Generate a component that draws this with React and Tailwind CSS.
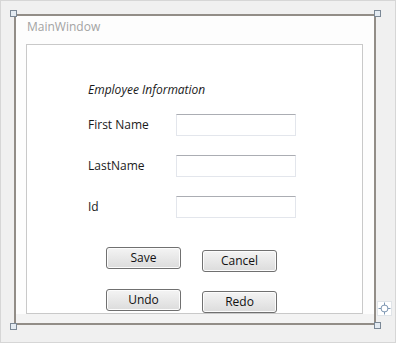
const font = { fontFamily: '"Open Sans", "Noto Sans", sans-serif' };

function Handle({ className }) {
  return <div className={`absolute w-[7px] h-[7px] border border-[#7b8896] bg-[#e4ebf2] ${className}`} />;
}

function Field({ label, first }) {
  return (
    <div className={`flex items-center h-[22px] ${first ? '' : 'mt-[19px]'}`}>
      <span className="w-[88px] text-[12px] text-[#1a1a1a] -mt-[1px]">{label}</span>
      <div className="w-[120px] h-[22px] border border-[#e3e6ec] border-t-[#abadb3] bg-white" />
    </div>
  );
}

function Btn({ children, className }) {
  return (
    <button className={`w-[75px] h-[22px] rounded-[3px] border border-[#707070] bg-gradient-to-b from-[#f4f4f4] to-[#dcdcdc] text-[12px] text-[#111] leading-none shadow-[inset_0_0_0_1px_#fcfcfc] ${className}`}>
      {children}
    </button>
  );
}

export default function App() {
  return (
    <div className="relative w-[396px] h-[343px] bg-[#f0f0f0] border border-[#d6d6d6] pl-[13px] pt-[13px]" style={font}>
      <div className="w-[362px] h-[311px] border-2 border-[#928d87] bg-[#fdfdfd] flex flex-col">
        <div className="h-[28px] pl-[11px] pt-[2px] text-[12px] text-[#a3a3a3]">MainWindow</div>
        <div className="ml-[10px] w-[337px] h-[270px] border border-[#c9c9c9] bg-white pl-[61px] pt-[39px]">
          <div className="text-[12px] italic text-[#1a1a1a] leading-none">Employee Information</div>
          <div className="mt-[18px]">
            <Field label="First Name" first />
            <Field label="LastName" />
            <Field label="Id" />
          </div>
          <div className="ml-[18px] mt-[29px] grid grid-cols-[75px_75px] gap-x-[21px] gap-y-[20px]">
            <Btn>Save</Btn>
            <Btn className="mt-[3px]">Cancel</Btn>
            <Btn className="-mt-[3px]">Undo</Btn>
            <Btn className="-mt-[1px]">Redo</Btn>
          </div>
        </div>
        <div className="flex-1 bg-[#f3f3f3]" />
      </div>
      <Handle className="left-[9px] top-[9px]" />
      <Handle className="left-[373px] top-[9px]" />
      <Handle className="left-[9px] top-[322px]" />
      <Handle className="left-[373px] top-[321px]" />
      <div className="absolute left-[376px] top-[300px] w-[15px] h-[15px] bg-white border border-[#e0e4e8] flex items-center justify-center">
        <svg width="13" height="13" viewBox="0 0 13 13" fill="none" stroke="#7d96b2" strokeWidth="1">
          <circle cx="6.5" cy="6.5" r="3.5" />
          <path d="M6.5 0.5v3M6.5 9.5v3M0.5 6.5h3M9.5 6.5h3" />
        </svg>
      </div>
    </div>
  );
}
